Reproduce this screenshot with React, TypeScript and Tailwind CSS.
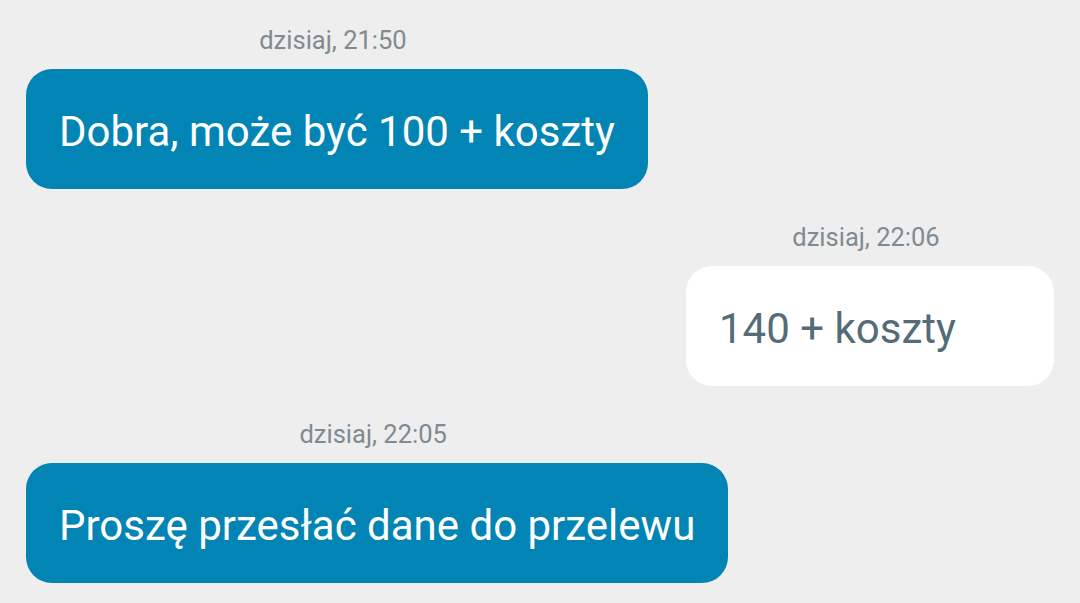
import React from "react";

const font = { fontFamily: "Roboto, 'Noto Sans', sans-serif" };

function Msg({ time, text, mine }: { time: string; text: string; mine?: boolean }) {
  return (
    <div className={`flex w-fit flex-col items-center ${mine ? "self-end" : "self-start"}`}>
      <div className="h-[28px] pr-[8px] text-[25.5px] leading-[28px] text-[#7f8b91]">{time}</div>
      <div
        className={`mt-[15px] flex h-[120px] items-center rounded-[26px] px-[33px] pt-[4px] text-[42px] ${
          mine ? "min-w-[368px] bg-white text-[#546b78]" : "bg-[#0284b4] text-white"
        }`}
      >
        {text}
      </div>
    </div>
  );
}

export default function App() {
  return (
    <div className="flex h-[603px] w-[1080px] flex-col gap-[34px] overflow-hidden bg-[#eeeeee] px-[26px] pt-[26px]" style={font}>
      <Msg time="dzisiaj, 21:50" text="Dobra, może być 100 + koszty" />
      <Msg time="dzisiaj, 22:06" text="140 + koszty" mine />
      <Msg time="dzisiaj, 22:05" text="Proszę przesłać dane do przelewu" />
    </div>
  );
}
